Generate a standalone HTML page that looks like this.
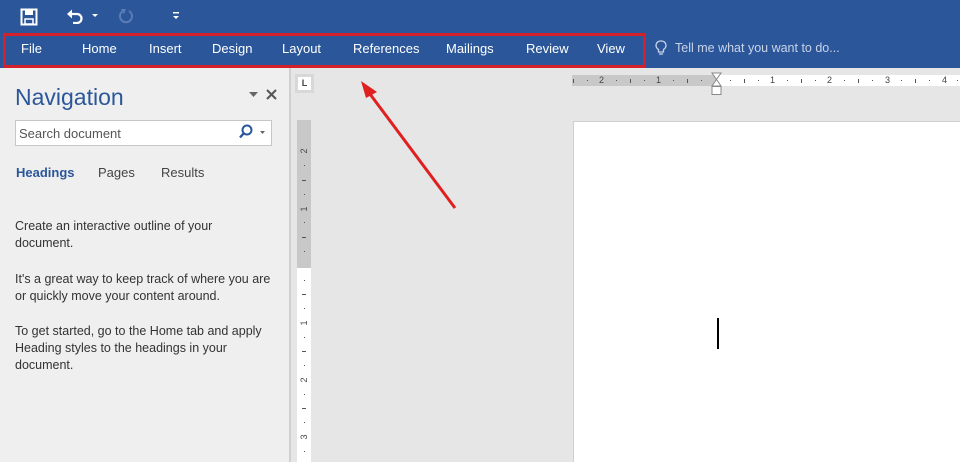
<!DOCTYPE html>
<html><head><style>
*{margin:0;padding:0;box-sizing:border-box}
body{width:960px;height:462px;overflow:hidden;position:relative;font-family:"Liberation Sans",sans-serif;background:#e6e6e6}
.top{position:absolute;left:0;top:0;width:960px;height:68px;background:#2b579a}
.tab{position:absolute;top:41px;color:#fff;font-size:13px}
.nav{position:absolute;left:0;top:68px;width:291px;height:394px;background:#efefef;border-right:2px solid #d0d0d0}
.p{position:absolute;left:15px;font-size:12.5px;color:#333;line-height:17px}
.n{position:absolute;top:75px;font-size:9px;color:#444;line-height:11px}
.t{position:absolute;top:79px;width:1px;height:4px;background:#555}
.d{position:absolute;top:80px;width:1px;height:1px;background:#555}
.vn{position:absolute;left:299px;font-size:9px;color:#444;transform:rotate(-90deg);width:10px;text-align:center;line-height:10px}
.vt{position:absolute;left:302px;width:4px;height:1px;background:#555}
.vd{position:absolute;left:304px;width:1px;height:1px;background:#555}
</style></head><body>
<div class="top">
<svg style="position:absolute;left:20px;top:8px" width="18" height="18" viewBox="0 0 18 18"><rect x="1.5" y="1.5" width="15" height="15" fill="none" stroke="#fff" stroke-width="2"/><rect x="5" y="2" width="8" height="5" fill="#fff"/><rect x="5" y="11" width="8" height="5" fill="none" stroke="#fff" stroke-width="1.5"/></svg>
<svg style="position:absolute;left:66px;top:8px" width="36" height="16" viewBox="0 0 36 16"><path d="M4 6 H11 A4.5 4.5 0 0 1 11 15 H7" fill="none" stroke="#fff" stroke-width="2.2"/><path d="M1 6 L6 1.5 V10.5 Z" fill="#fff"/><path d="M26 6 h6 l-3 3z" fill="#fff"/></svg>
<svg style="position:absolute;left:117px;top:8px" width="18" height="16" viewBox="0 0 18 16"><path d="M6 3 A6 6 0 1 0 12 3" fill="none" stroke="#5b7cb5" stroke-width="2"/><path d="M4 1 L9 1 L7 6Z" fill="#5b7cb5"/></svg>
<svg style="position:absolute;left:171px;top:11px" width="10" height="10" viewBox="0 0 10 10"><rect x="2" y="1" width="6" height="1.5" fill="#fff"/><path d="M2 5h6l-3 3z" fill="#fff"/></svg>
<div style="position:absolute;left:3px;top:33px;width:643px;height:35px;border:3px solid #d4202a"></div>
<span class="tab" style="left:21px">File</span>
<span class="tab" style="left:82px">Home</span>
<span class="tab" style="left:149px">Insert</span>
<span class="tab" style="left:212px">Design</span>
<span class="tab" style="left:282px">Layout</span>
<span class="tab" style="left:353px">References</span>
<span class="tab" style="left:446px">Mailings</span>
<span class="tab" style="left:526px">Review</span>
<span class="tab" style="left:597px">View</span>
<svg style="position:absolute;left:655px;top:40px" width="12" height="16" viewBox="0 0 12 16"><path d="M6 1A4.5 4.5 0 0 0 3.5 9.5V12h5V9.5A4.5 4.5 0 0 0 6 1z" fill="none" stroke="#c8d3e8" stroke-width="1.3"/><path d="M4 14h4" stroke="#c8d3e8" stroke-width="1.3"/></svg>
<span class="tab" style="left:675px;color:#c8d3e8;font-size:12.5px">Tell me what you want to do...</span>
</div>
<div class="nav">
<div style="position:absolute;left:15px;top:16px;font-size:23px;color:#2b579a">Navigation</div>
<svg style="position:absolute;left:248px;top:20px" width="34" height="14" viewBox="0 0 34 14"><path d="M1 4h9l-4.5 5z" fill="#666"/><path d="M19 2l9 9M28 2l-9 9" stroke="#555" stroke-width="2"/></svg>
<div style="position:absolute;left:15px;top:52px;width:257px;height:26px;background:#fff;border:1px solid #c6c6c6"></div>
<span style="position:absolute;left:19px;top:58px;font-size:13px;color:#555">Search document</span>
<svg style="position:absolute;left:238px;top:56px" width="32" height="16" viewBox="0 0 32 16"><circle cx="9" cy="6" r="4.5" fill="none" stroke="#2b579a" stroke-width="2"/><path d="M6 9L2 13.5" stroke="#2b579a" stroke-width="2.4"/><path d="M22 7h5l-2.5 3z" fill="#666"/></svg>
<span style="position:absolute;left:16px;top:97px;font-size:13px;font-weight:bold;color:#2b579a">Headings</span>
<span style="position:absolute;left:98px;top:97px;font-size:13px;color:#444">Pages</span>
<span style="position:absolute;left:161px;top:97px;font-size:13px;color:#444">Results</span>
<div class="p" style="top:150px">Create an interactive outline of your<br>document.</div>
<div class="p" style="top:203px">It's a great way to keep track of where you are<br>or quickly move your content around.</div>
<div class="p" style="top:255px">To get started, go to the Home tab and apply<br>Heading styles to the headings in your<br>document.</div>
</div>
<div style="position:absolute;left:295px;top:74px;width:19px;height:19px;background:#d8d8d8"></div>
<div style="position:absolute;left:298px;top:77px;width:13px;height:13px;background:#fff;font-size:9px;font-weight:bold;text-align:center;line-height:12px;color:#444">L</div>
<div style="position:absolute;left:297px;top:120px;width:14px;height:148px;background:#c8c8c8"></div>
<div style="position:absolute;left:297px;top:268px;width:14px;height:194px;background:#fff"></div>
<div style="position:absolute;left:572px;top:75px;width:144px;height:11px;background:#c8c8c8"></div>
<div style="position:absolute;left:716px;top:75px;width:244px;height:11px;background:#fff"></div>
<!-- horizontal ruler -->
<div class="t" style="left:573px"></div><div class="d" style="left:587px"></div><span class="n" style="left:599px">2</span><div class="d" style="left:616px"></div><div class="t" style="left:630px"></div><div class="d" style="left:644px"></div><span class="n" style="left:656px">1</span><div class="d" style="left:673px"></div><div class="t" style="left:687px"></div><div class="d" style="left:701px"></div>
<div class="d" style="left:730px"></div><div class="t" style="left:744px"></div><div class="d" style="left:758px"></div><span class="n" style="left:770px">1</span><div class="d" style="left:787px"></div><div class="t" style="left:801px"></div><div class="d" style="left:815px"></div><span class="n" style="left:827px">2</span><div class="d" style="left:844px"></div><div class="t" style="left:858px"></div><div class="d" style="left:872px"></div><span class="n" style="left:885px">3</span><div class="d" style="left:901px"></div><div class="t" style="left:915px"></div><div class="d" style="left:929px"></div><span class="n" style="left:942px">4</span><div class="d" style="left:957px"></div>
<svg style="position:absolute;left:711px;top:72px" width="11" height="24" viewBox="0 0 11 24"><path d="M1 1h9L5.5 7.5L10 14H1L5.5 7.5Z" fill="#fff" stroke="#888"/><rect x="1" y="14.5" width="9" height="8" fill="#fff" stroke="#888"/></svg>
<!-- vertical ruler -->
<span class="vn" style="top:146px">2</span><div class="vd" style="top:165px"></div><div class="vt" style="top:180px"></div><div class="vd" style="top:194px"></div><span class="vn" style="top:204px">1</span><div class="vd" style="top:222px"></div><div class="vt" style="top:237px"></div><div class="vd" style="top:251px"></div>
<div class="vd" style="top:280px"></div><div class="vt" style="top:294px"></div><div class="vd" style="top:308px"></div><span class="vn" style="top:318px">1</span><div class="vd" style="top:337px"></div><div class="vt" style="top:351px"></div><div class="vd" style="top:365px"></div><span class="vn" style="top:375px">2</span><div class="vd" style="top:394px"></div><div class="vt" style="top:408px"></div><div class="vd" style="top:422px"></div><span class="vn" style="top:432px">3</span><div class="vd" style="top:451px"></div>
<div style="position:absolute;left:573px;top:121px;width:387px;height:341px;background:#fff;border-left:1px solid #cfcfcf;border-top:1px solid #cfcfcf"></div>
<div style="position:absolute;left:717px;top:318px;width:1.5px;height:31px;background:#000"></div>
<svg style="position:absolute;left:0;top:0" width="960" height="462"><path d="M455 208L367 90" stroke="#e02020" stroke-width="3"/><path d="M361 81L377 92L366 98Z" fill="#e02020"/></svg>
</body></html>
